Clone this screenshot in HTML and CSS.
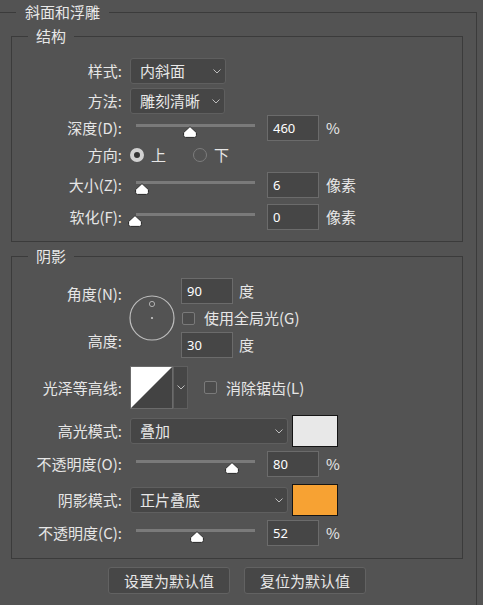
FILE: index.html
```html
<!DOCTYPE html>
<html lang="zh-CN">
<head>
<meta charset="utf-8">
<title>斜面和浮雕</title>
<link rel="stylesheet" href="styles.css">
</head>
<body>
<fieldset class="outer">
  <legend class="outer-title">斜面和浮雕</legend>

  <fieldset class="group">
    <legend class="group-title">结构</legend>
    <div class="rows rows-structure">
      <div class="row">
        <span class="label">样式:</span>
        <div class="select w95"><span>内斜面</span><svg class="chev" width="8" height="5" viewBox="0 0 8 5"><path d="M0.5 0.5 L4 4 L7.5 0.5" fill="none" stroke="#bdbdbd" stroke-width="1"/></svg></div>
      </div>
      <div class="row mt4">
        <span class="label">方法:</span>
        <div class="select w94"><span>雕刻清晰</span><svg class="chev" width="8" height="5" viewBox="0 0 8 5"><path d="M0.5 0.5 L4 4 L7.5 0.5" fill="none" stroke="#bdbdbd" stroke-width="1"/></svg></div>
      </div>
      <div class="row mt1">
        <span class="label">深度(D):</span>
        <div class="slider"><div class="track"></div><svg class="thumb" style="left:47px" width="14" height="12" viewBox="0 0 14 12"><path d="M7 0.6 L13.4 6.6 V9.5 Q13.4 11.4 11.5 11.4 H2.5 Q0.6 11.4 0.6 9.5 V6.6 Z" fill="#fff" stroke="#262626" stroke-width="1"/></svg></div>
        <div class="num">460</div><span class="unit">%</span>
      </div>
      <div class="row mt1">
        <span class="label">方向:</span>
        <span class="radio checked"></span><span class="radio-text">上</span>
        <span class="radio second"></span><span class="radio-text">下</span>
      </div>
      <div class="row mt4">
        <span class="label">大小(Z):</span>
        <div class="slider"><div class="track"></div><svg class="thumb" style="left:-1px" width="14" height="12" viewBox="0 0 14 12"><path d="M7 0.6 L13.4 6.6 V9.5 Q13.4 11.4 11.5 11.4 H2.5 Q0.6 11.4 0.6 9.5 V6.6 Z" fill="#fff" stroke="#262626" stroke-width="1"/></svg></div>
        <div class="num">6</div><span class="unit">像素</span>
      </div>
      <div class="row mt6">
        <span class="label">软化(F):</span>
        <div class="slider"><div class="track"></div><svg class="thumb" style="left:-8px" width="14" height="12" viewBox="0 0 14 12"><path d="M7 0.6 L13.4 6.6 V9.5 Q13.4 11.4 11.5 11.4 H2.5 Q0.6 11.4 0.6 9.5 V6.6 Z" fill="#fff" stroke="#262626" stroke-width="1"/></svg></div>
        <div class="num">0</div><span class="unit">像素</span>
      </div>
    </div>
  </fieldset>

  <fieldset class="group group-shadow">
    <legend class="group-title">阴影</legend>
    <div class="rows rows-shadow">
      <div class="angle">
        <span class="label angle-label">角度(N):</span>
        <svg class="dial" width="46" height="46" viewBox="0 0 46 46">
          <circle cx="23" cy="23" r="22" fill="none" stroke="#bdbdbd" stroke-width="1.2"/>
          <circle cx="23" cy="9" r="2.6" fill="none" stroke="#b0b0b0" stroke-width="1"/>
          <circle cx="23" cy="23" r="1.1" fill="#c8c8c8"/>
        </svg>
        <div class="cell-input"><div class="num">90</div><span class="unit-deg">度</span></div>
        <div class="cell-check"><span class="check"></span><span class="check-text">使用全局光(G)</span></div>
        <span class="label altitude-label">高度:</span>
        <div class="cell-input cell-alt"><div class="num">30</div><span class="unit-deg">度</span></div>
      </div>

      <div class="row contour-row">
        <span class="label">光泽等高线:</span>
        <svg class="contour" width="43" height="43" viewBox="0 0 43 43">
          <rect x="0.5" y="0.5" width="42" height="42" fill="#434343" stroke="#6b6b6b"/>
          <polygon points="1,1 42,1 1,42" fill="#ffffff"/>
        </svg>
        <div class="contour-btn"><svg width="8" height="5" viewBox="0 0 8 5"><path d="M0.5 0.5 L4 4 L7.5 0.5" fill="none" stroke="#bdbdbd" stroke-width="1"/></svg></div>
        <span class="check check-aa"></span><span class="check-text">消除锯齿(L)</span>
      </div>

      <div class="row row32 mt6">
        <span class="label">高光模式:</span>
        <div class="select w158"><span>叠加</span><svg class="chev" width="8" height="5" viewBox="0 0 8 5"><path d="M0.5 0.5 L4 4 L7.5 0.5" fill="none" stroke="#bdbdbd" stroke-width="1"/></svg></div>
        <span class="swatch swatch-light"></span>
      </div>
      <div class="row mt4">
        <span class="label">不透明度(O):</span>
        <div class="slider"><div class="track"></div><svg class="thumb" style="left:89px" width="14" height="12" viewBox="0 0 14 12"><path d="M7 0.6 L13.4 6.6 V9.5 Q13.4 11.4 11.5 11.4 H2.5 Q0.6 11.4 0.6 9.5 V6.6 Z" fill="#fff" stroke="#262626" stroke-width="1"/></svg></div>
        <div class="num">80</div><span class="unit">%</span>
      </div>
      <div class="row row32 mt7">
        <span class="label">阴影模式:</span>
        <div class="select w158"><span>正片叠底</span><svg class="chev" width="8" height="5" viewBox="0 0 8 5"><path d="M0.5 0.5 L4 4 L7.5 0.5" fill="none" stroke="#bdbdbd" stroke-width="1"/></svg></div>
        <span class="swatch swatch-orange"></span>
      </div>
      <div class="row mt4">
        <span class="label">不透明度(C):</span>
        <div class="slider"><div class="track"></div><svg class="thumb" style="left:54px" width="14" height="12" viewBox="0 0 14 12"><path d="M7 0.6 L13.4 6.6 V9.5 Q13.4 11.4 11.5 11.4 H2.5 Q0.6 11.4 0.6 9.5 V6.6 Z" fill="#fff" stroke="#262626" stroke-width="1"/></svg></div>
        <div class="num">52</div><span class="unit">%</span>
      </div>
    </div>
  </fieldset>

  <div class="buttons">
    <div class="btn">设置为默认值</div>
    <div class="btn">复位为默认值</div>
  </div>
</fieldset>
</body>
</html>
```

FILE: styles.css
```css
html, body {
  margin: 0;
  padding: 0;
  overflow: hidden;
}

body {
  background: #535353;
  color: #e6e6e6;
  font-family: "Noto Sans CJK SC", "Noto Sans", sans-serif;
  font-size: 15px;
  line-height: 20px;
}

.outer {
  margin: 0 6px 0 0;
  padding: 0;
  border: 0;
  border-top: 1px solid #3b3b3b;
  border-right: 1px solid #3b3b3b;
  min-width: 0;
  min-height: 100vh;
  box-sizing: border-box;
}

.outer-title {
  margin-left: 16px;
  padding: 0 9px;
  line-height: 24px;
  font-size: 15px;
  color: #e8e8e8;
}

.group {
  margin: 0 13px 0 11px;
  padding: 0;
  border: 1px solid #3b3b3b;
  min-width: 0;
}

.group-shadow {
  margin-top: 2px;
}

.group-title {
  margin-left: 16px;
  padding: 0 8px;
  line-height: 24px;
  font-size: 15px;
  color: #e8e8e8;
}

.rows-structure {
  padding: 10px 0 11px 0;
}

.rows-shadow {
  padding: 10px 0 12px 0;
}

.row {
  display: flex;
  align-items: center;
  height: 26px;
}

.row32 {
  height: 32px;
}

.mt1 { margin-top: 1px; }
.mt4 { margin-top: 4px; }
.mt6 { margin-top: 6px; }
.mt7 { margin-top: 7px; }

.label {
  width: 110px;
  margin-right: 8px;
  text-align: right;
  white-space: nowrap;
  flex: none;
}

.select {
  height: 26px;
  box-sizing: border-box;
  border: 1px solid #5f5f5f;
  border-radius: 3px;
  background: #464646;
  display: flex;
  align-items: center;
  justify-content: space-between;
  padding: 0 4px 0 9px;
  color: #e8e8e8;
  flex: none;
}

.w95 { width: 96px; }
.w94 { width: 95px; }
.w158 { width: 158px; }

.chev {
  display: block;
}

.slider {
  position: relative;
  width: 119px;
  height: 26px;
  margin-left: 6px;
  margin-right: 12px;
  flex: none;
}

.track {
  margin-top: 9px;
  height: 3px;
  background: #7a7a7a;
}

.thumb {
  position: absolute;
  top: 11px;
  display: block;
}

.num {
  width: 52px;
  height: 26px;
  box-sizing: border-box;
  border: 1px solid #6b6b6b;
  background: #464646;
  font-family: "Noto Sans", sans-serif;
  font-size: 13px;
  color: #ffffff;
  padding-left: 5px;
  display: flex;
  align-items: center;
  flex: none;
}

.unit {
  margin-left: 7px;
  color: #e8e8e8;
}

.radio {
  width: 14px;
  height: 14px;
  box-sizing: border-box;
  border-radius: 50%;
  border: 1.5px solid #7c7c7c;
  flex: none;
}

.radio.checked {
  border: 4.5px solid #d2d2d2;
  background: #353535;
}

.radio.second {
  margin-left: 27px;
}

.radio-text {
  margin-left: 7px;
}

.angle {
  display: grid;
  grid-template-columns: 118px 51px 1fr;
  grid-template-rows: 26px 28px 26px;
}

.angle .label {
  width: auto;
  margin-right: 0;
  padding-right: 8px;
}

.angle-label {
  grid-column: 1;
  grid-row: 1;
  align-self: start;
  padding-top: 6px;
}

.altitude-label {
  grid-column: 1;
  grid-row: 3;
  align-self: start;
  margin-top: -1px;
}

.dial {
  grid-column: 2;
  grid-row: 1 / 4;
  align-self: center;
  display: block;
  margin-left: -1px;
}

.cell-input {
  grid-column: 3;
  grid-row: 1;
  display: flex;
  align-items: center;
}

.cell-alt {
  grid-row: 3;
}

.unit-deg {
  margin-left: 6px;
}

.cell-check {
  grid-column: 3;
  grid-row: 2;
  display: flex;
  align-items: center;
  padding-left: 1px;
}

.check {
  width: 13px;
  height: 13px;
  box-sizing: border-box;
  border: 1px solid #7a7a7a;
  border-radius: 2px;
  background: #4c4c4c;
  flex: none;
}

.check-text {
  margin-left: 9px;
  white-space: nowrap;
}

.contour-row {
  height: 43px;
  margin-top: 8px;
}

.contour {
  display: block;
  flex: none;
}

.contour-btn {
  width: 15px;
  height: 43px;
  box-sizing: border-box;
  border: 1px solid #5f5f5f;
  background: #464646;
  display: flex;
  align-items: center;
  justify-content: center;
  flex: none;
}

.check-aa {
  margin-left: 16px;
}

.swatch {
  width: 46px;
  height: 32px;
  box-sizing: border-box;
  border: 1px solid #151515;
  margin-left: 4px;
  flex: none;
}

.swatch-light {
  background: #e8e8e8;
}

.swatch-orange {
  background: #f7a233;
}

.buttons {
  display: flex;
  justify-content: center;
  gap: 14px;
  margin: 8px 13px 0 11px;
}

.btn {
  width: 122px;
  height: 27px;
  box-sizing: border-box;
  border: 1px solid #626262;
  border-radius: 3px;
  background: #474747;
  color: #e8e8e8;
  display: flex;
  align-items: center;
  justify-content: center;
}
```
